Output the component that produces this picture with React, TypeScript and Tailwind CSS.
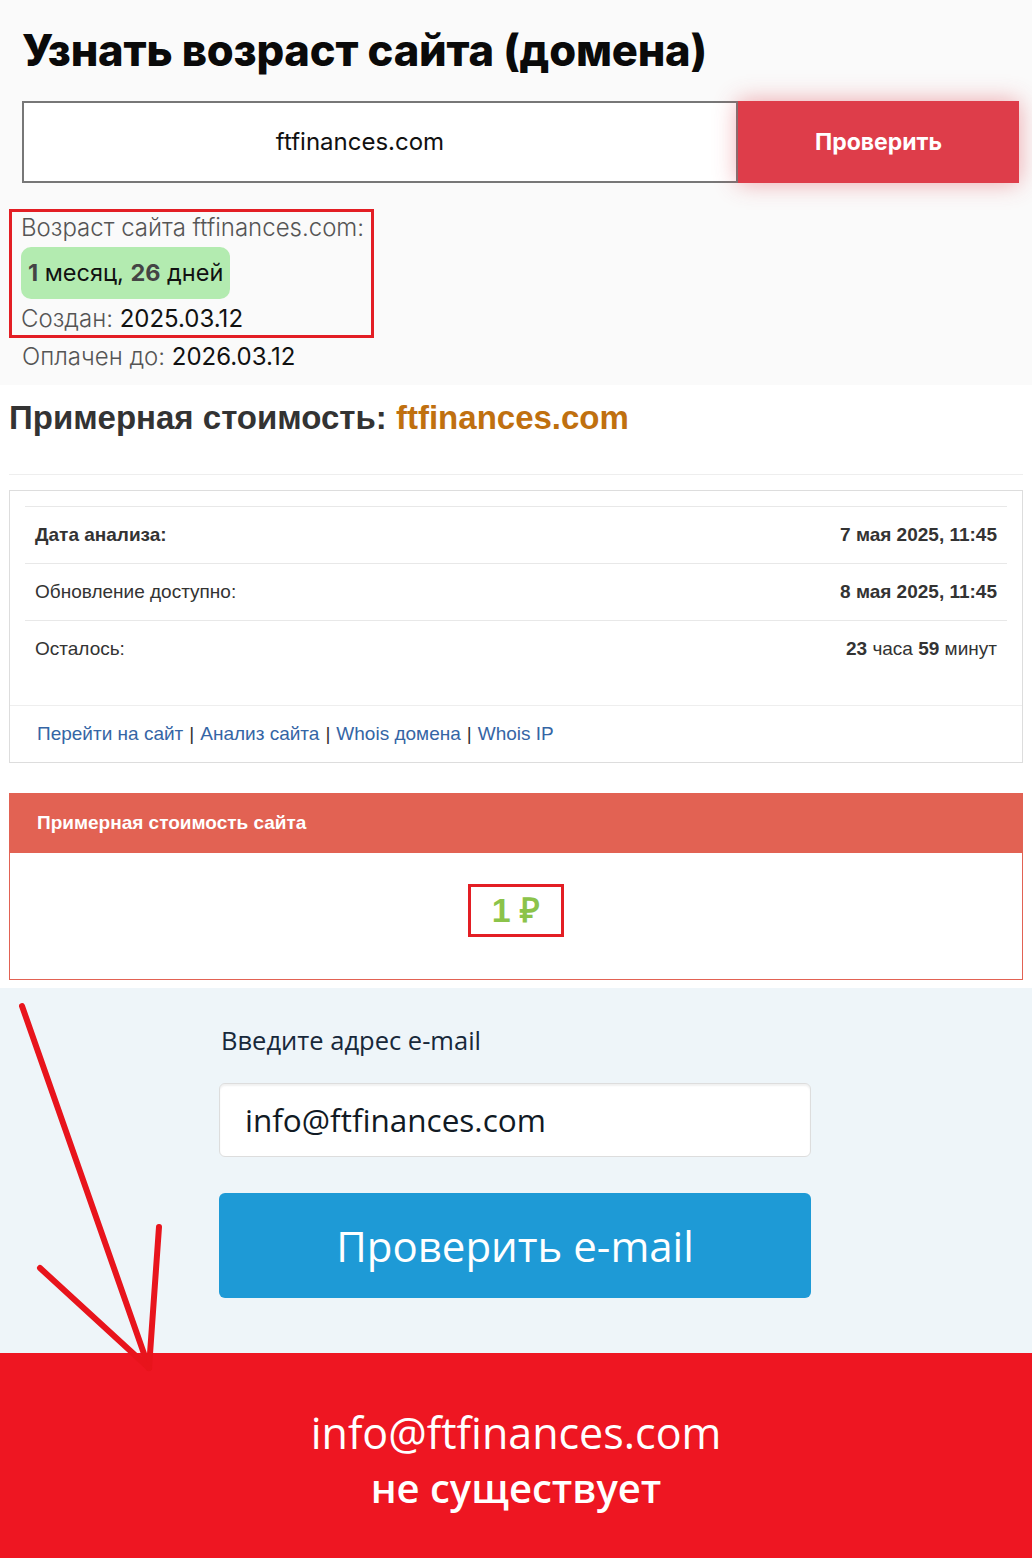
import React from 'react';

const montserrat = "font-['Inter','Noto_Sans',sans-serif]";
const arial = "font-['Liberation_Sans','Arial',sans-serif]";
const open = "font-['Open_Sans','Noto_Sans',sans-serif]";

export default function App() {
  return (
    <div className="relative w-[1032px] overflow-hidden bg-white">
      <AgeSection />
      <CostSection />
      <EmailSection />
      <ResultBanner />
      <Arrows />
    </div>
  );
}

/*
 *
 * AGE CHECK
 *
 */

function AgeSection() {
  return (
    <section className={`${montserrat} bg-[#fafafa] px-[22px] pt-[22px] pb-[14px]`}>
      <h1 className="text-[43.5px] leading-[56px] font-extrabold tracking-[-0.2px] text-[#0a0a0a]">
        Узнать возраст сайта (домена)
      </h1>

      <div className="mt-[23px] flex h-[82px] w-[997px]">
        <div className="flex grow items-center justify-center border-2 border-[#777] bg-white pr-[40px] text-[24px] text-[#111]">
          ftfinances.com
        </div>
        <button className="w-[281px] bg-[#de3d4a] text-[23px] font-bold text-white shadow-[0_0_22px_rgba(222,61,74,0.45)]">
          Проверить
        </button>
      </div>

      <div className="-ml-[13px] mt-[26px] w-[365px] border-[3px] border-[#e31e24] pl-[9px] pt-[2px] pb-[2px]">
        <p className="text-[24px] leading-[28px] font-light whitespace-nowrap text-[#555]">
          Возраст сайта ftfinances.com:
        </p>
        <div className="mt-[5px] inline-flex h-[52px] items-center rounded-[10px] bg-[#b3ebb0] px-[7px] text-[23.5px] text-[#111]">
          <b className="font-bold text-[#444]">1</b>&nbsp;месяц,&nbsp;<b className="font-bold text-[#444]">26</b>&nbsp;дней
        </div>
        <p className="mt-[6px] text-[24px] leading-[28px] font-light text-[#555]">
          Создан: <span className="font-normal text-[#111]">2025.03.12</span>
        </p>
      </div>
      <p className="mt-[5px] text-[24px] leading-[28px] font-light text-[#555]">
        Оплачен до: <span className="font-normal text-[#111]">2026.03.12</span>
      </p>
    </section>
  );
}

/*
 *
 * COST
 *
 */

const rows = [
  { label: 'Дата анализа:', value: <b>7 мая 2025, 11:45</b>, bold: true },
  { label: 'Обновление доступно:', value: <b>8 мая 2025, 11:45</b> },
  {
    label: 'Осталось:',
    value: (
      <>
        <b>23</b> часа <b>59</b> минут
      </>
    ),
  },
];

function CostSection() {
  return (
    <section className={`${arial} ml-[3px] bg-white pb-[8px] pl-[6px] pr-[9px]`}>
      <h2 className="pt-[14px] text-[33px] leading-[38px] font-bold text-[#333]">
        Примерная стоимость: <span className="text-[#c0700f]">ftfinances.com</span>
      </h2>
      <div className="mt-[37px] border-t border-[#eee]" />

      <div className="mt-[15px] border border-[#ddd]">
        <div className="px-[15px] pt-[15px]">
          {rows.map((row) => (
            <div
              key={row.label}
              className="flex h-[57px] items-center justify-between border-t border-[#e8e8e8] px-[10px] text-[19px] text-[#333]"
            >
              <span className={row.bold ? 'font-bold' : ''}>{row.label}</span>
              <span>{row.value}</span>
            </div>
          ))}
          <div className="h-[28px]" />
        </div>
        <div className="flex h-[57px] items-center border-t border-[#eee] px-[27px] text-[19px] text-[#3565a5]">
          Перейти на сайт <Sep /> Анализ сайта <Sep /> Whois домена <Sep /> Whois IP
        </div>
      </div>

      <div className="mt-[30px] border border-[#e26253]">
        <div className="flex h-[59px] items-center bg-[#e26253] px-[27px] text-[19px] font-bold text-white">
          Примерная стоимость сайта
        </div>
        <div className="flex h-[126px] items-center justify-center">
          <div className="-mt-[12px] flex h-[53px] w-[96px] items-center justify-center border-[3px] border-[#e31e24] text-[34px] font-bold text-[#8bc34a]">
            1 ₽
          </div>
        </div>
      </div>
    </section>
  );
}

function Sep() {
  return <span className="mx-[6px] text-[#333]">|</span>;
}

/*
 *
 * EMAIL
 *
 */

function EmailSection() {
  return (
    <section className={`${open} bg-[#eef5f9] pl-[219px] pt-[36px] pb-[55px]`}>
      <p className="pl-[2px] text-[25.5px] leading-[32px] text-[#17283a]">Введите адрес e-mail</p>
      <div className="mt-[27px] flex h-[74px] w-[592px] items-center rounded-[6px] border border-[#ddd] bg-white px-[25px] text-[31.5px] text-[#111a24] shadow-[inset_0_2px_2px_rgba(0,0,0,0.06)]">
        info@ftfinances.com
      </div>
      <button className="mt-[36px] flex h-[105px] w-[592px] items-center justify-center rounded-[6px] bg-[#1e9ad6] text-[42px] text-white">
        Проверить e-mail
      </button>
    </section>
  );
}

function ResultBanner() {
  return (
    <section className={`${open} flex h-[206px] flex-col items-center justify-center bg-[#ee1622] pt-[8px] text-white`}>
      <p className="text-[43px] leading-[55px]">info@ftfinances.com</p>
      <p className="text-[40px] leading-[55px] font-semibold">не существует</p>
    </section>
  );
}

function Arrows() {
  return (
    <svg
      className="pointer-events-none absolute top-0 left-0"
      width="1032"
      height="1558"
      viewBox="0 0 1032 1558"
    >
      <g stroke="#e8141c" strokeWidth="6" strokeLinecap="round" fill="none">
        <path d="M22 1006 L149 1368" />
        <path d="M159 1227 L149 1368" />
        <path d="M40 1268 L149 1368" />
      </g>
    </svg>
  );
}
